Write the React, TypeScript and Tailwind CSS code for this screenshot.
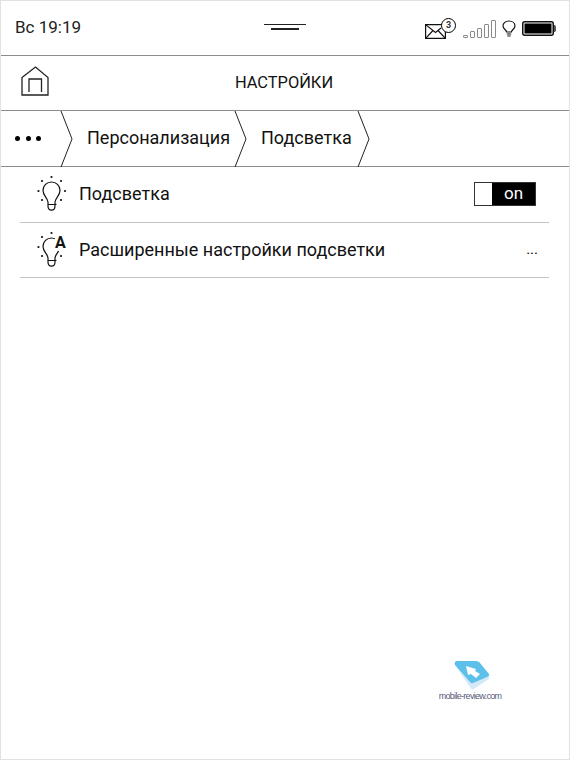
import type { ReactNode } from 'react';

function HomeIcon() {
    return (
        <svg width="28" height="30" viewBox="0 0 28 30" fill="none" stroke="#222" strokeWidth="1.3">
            <path d="M1 11.500 14.500 1 27 11.500V29H1Z" />
            <path d="M8 26V13H20.500V26" />
        </svg>
    );
}

function Chevron() {
    return (
        <svg width="14" height="56" viewBox="0 0 14 56" fill="none" stroke="#222" strokeWidth="1" className="shrink-0">
            <path d="M1 0 12 28 1 56" />
        </svg>
    );
}

function MailBadge() {
    return (
        <div className="relative w-[31px] h-[21px]">
            <svg width="21" height="15" viewBox="0 0 21 15" fill="none" stroke="#111" strokeWidth="1.2" className="absolute left-0 top-[6px]">
                <path d="M.6.6H20.400V14.400H.6Z" />
                <path d="M.6.6 10.500 8.500 16 4M.6 14.400 8 6.500M20.400 14.400 13 6.500" />
            </svg>
            <div className="absolute right-0 top-0 w-[15px] h-[15px] rounded-full border border-black bg-white flex items-center justify-center text-[9px] leading-none font-bold text-[#333]">
                3
            </div>
        </div>
    );
}

function Signal() {
    const bars = [3, 7, 10, 14, 18];
    return (
        <div className="flex items-end gap-[2px] h-[19px]">
            {bars.map((h) => (
                <div key={h} className="w-[5px] border border-[#8a8a8a] rounded-[1px]" style={{ height: h }} />
            ))}
        </div>
    );
}

function SmallBulb() {
    return (
        <svg width="14" height="17" viewBox="0 0 14 17" fill="none" stroke="#111" strokeWidth="1.2">
            <path d="M4.600 12C4.400 9.800 1 9 1 6 1 3 3.600 1 7 1s6 2 6 5c0 3-3.400 3.800-3.600 6Z" />
            <path d="M4.800 14H9.200M5.400 16H8.600" />
        </svg>
    );
}

function Battery() {
    return (
        <svg width="34" height="15" viewBox="0 0 34 15">
            <rect x=".75" y=".75" width="30.500" height="13.500" rx="2" fill="#fff" stroke="#111" strokeWidth="1.5" />
            <rect x="2.500" y="2.500" width="27" height="10" fill="#000" />
            <path d="M32 4H33L34 5.500V9.500L33 11H32Z" fill="#555" />
        </svg>
    );
}

function BulbLarge() {
    return (
        <svg width="32" height="37" viewBox="0 0 32 37" fill="none" stroke="#111" strokeWidth="1.2">
            <path d="M12 27C11.500 22.500 7 20.500 7 15.500 7 10.500 10.800 7 15.500 7S24 10.500 24 15.500C24 20.500 19.500 22.500 19 27" />
            <path d="M12 27V31C12 36.500 19 36.500 19 31V27M12 29.500H20.500" />
            <g fill="#111" stroke="none">
                <circle cx="15.500" cy="2" r="1.100" />
                <circle cx="6" cy="6" r="1.100" />
                <circle cx="25" cy="6" r="1.100" />
                <circle cx="2.500" cy="16" r="1.100" />
                <circle cx="29" cy="16" r="1.100" />
                <circle cx="6" cy="25" r="1.100" />
                <circle cx="25" cy="25" r="1.100" />
            </g>
        </svg>
    );
}

function Row({ height, icon, label, right }: { height: string; icon: ReactNode; label: string; right: ReactNode }) {
    return (
        <div className={`${height} ml-[19px] mr-[20px] pb-[2px] border-b border-[#c4c4c4] flex items-center`}>
            <div className="w-[59px] pl-[16px] shrink-0 relative">{icon}</div>
            <div className="flex-1 text-[18px] text-[#111]">{label}</div>
            {right}
        </div>
    );
}

export default function App() {
    return (
        <div className="w-[570px] h-[760px] bg-white border border-[#e2e2e2] font-['Roboto',sans-serif] text-[#111] overflow-hidden flex flex-col">
            {/* status bar */}
            <div className="h-[55px] shrink-0 border-b border-[#8c8c8c] relative flex items-center pl-[14px] pr-[13px] justify-between">
                <span className="text-[17px] text-[#222]">Вс 19:19</span>
                <div className="absolute left-[263px] top-[23px] flex flex-col items-center gap-[3px]">
                    <div className="w-[42px] h-px bg-[#222]" />
                    <div className="w-[28px] h-[2px] bg-[#222]" />
                </div>
                <div className="flex items-center">
                    <MailBadge />
                    <div className="ml-[7px]"><Signal /></div>
                    <div className="ml-[6px]"><SmallBulb /></div>
                    <div className="ml-[6px]"><Battery /></div>
                </div>
            </div>

            {/* title bar */}
            <div className="h-[55px] shrink-0 pr-[2px] border-b border-[#8c8c8c] relative flex items-center justify-center">
                <div className="absolute left-[20px] top-[10px]"><HomeIcon /></div>
                <span className="text-[16.400px] text-[#111]">НАСТРОЙКИ</span>
            </div>

            {/* breadcrumbs */}
            <div className="h-[56px] shrink-0 border-b border-[#8c8c8c] flex items-center">
                <div className="w-[59px] pl-[14px] flex gap-[5.500px]">
                    <div className="w-[5px] h-[5px] rounded-full bg-black" />
                    <div className="w-[5px] h-[5px] rounded-full bg-black" />
                    <div className="w-[5px] h-[5px] rounded-full bg-black" />
                </div>
                <Chevron />
                <span className="ml-[13px] mb-[2px] text-[18px] text-[#111]">Персонализация</span>
                <div className="ml-[4px]"><Chevron /></div>
                <span className="ml-[13px] mb-[2px] text-[18px] text-[#111]">Подсветка</span>
                <div className="ml-[5px]"><Chevron /></div>
            </div>

            {/* settings list */}
            <Row
                height="h-[56px]"
                icon={<BulbLarge />}
                label="Подсветка"
                right={
                    <div className="w-[62px] h-[24px] mr-[13px] border border-[#333] flex">
                        <div className="w-[17px] bg-white" />
                        <div className="flex-1 bg-black text-white text-[17px] leading-[20px] text-center">on</div>
                    </div>
                }
            />
            <Row
                height="h-[55px]"
                icon={
                    <>
                        <BulbLarge />
                        <span className="absolute left-[35px] top-[4px] text-[16px] font-bold leading-none text-[#111] bg-white">A</span>
                    </>
                }
                label="Расширенные настройки подсветки"
                right={<span className="mr-[11px] text-[15px] text-black">...</span>}
            />

            {/* watermark */}
            <div className="flex-1 relative">
                <div className="absolute left-[438px] top-[383px] flex flex-col items-center w-[62px]">
                    <svg width="36" height="30" viewBox="0 0 36 30" className="ml-[4px]">
                        <path d="M1 4 18 29 35 18 34 13 18 22Z" fill="#d3e9f7" />
                        <path d="M3 0H22C24 0 25 1 26 2L35 13C35.500 14 35 15 34 15.500L19 22C18 22.500 17 22.500 16 21L1 4C0 2 1 0 3 0Z" fill="#5cc0ea" />
                        <path d="M12 5 22 8 21 10 26 13 22 17 17 13 14 14Z" fill="#fff" />
                    </svg>
                    <span className="text-[9px] leading-[10px] text-[#5a5a78] font-['Liberation_Sans',sans-serif] whitespace-nowrap tracking-[-0.700px]">mobile-review.com</span>
                </div>
            </div>
        </div>
    );
}
